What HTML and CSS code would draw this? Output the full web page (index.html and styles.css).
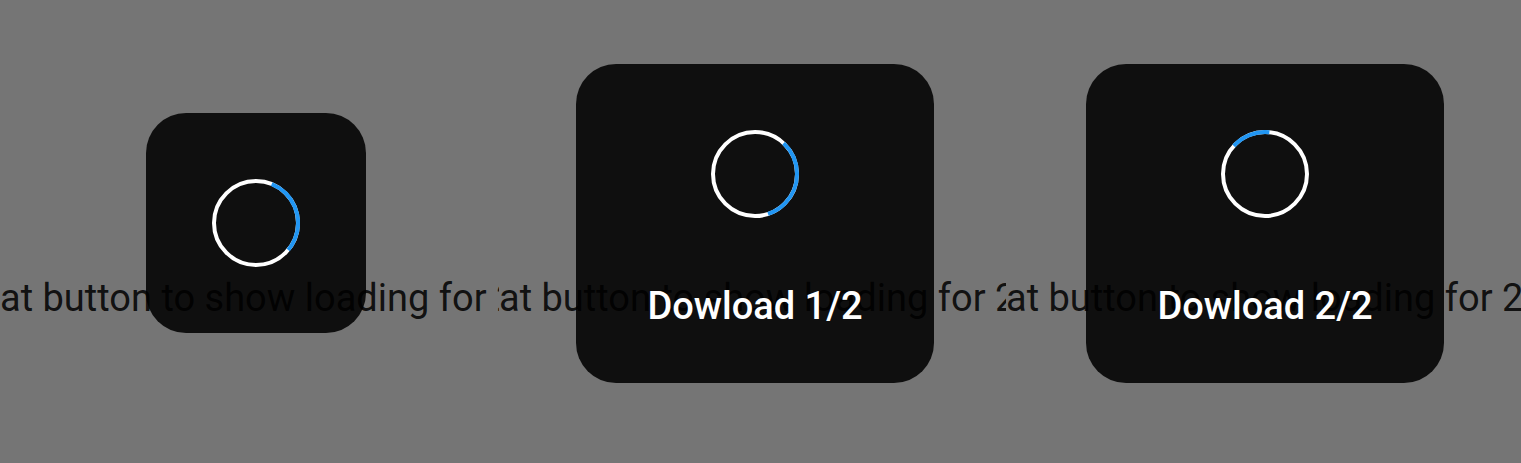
FILE: index.html
```html
<!DOCTYPE html>
<html>
<head>
<meta charset="utf-8">
<link rel="stylesheet" href="styles.css">
</head>
<body>
<main class="row">
  <section class="col col-1">
    <p class="hint">at button to show loading for 2 seconds</p>
    <div class="box box-small">
      <svg class="spinner" width="88" height="88" viewBox="0 0 88 88">
        <circle cx="44" cy="44" r="42" fill="none" stroke="#fff" stroke-width="4"/>
        <circle cx="44" cy="44" r="42" fill="none" stroke="#2196f3" stroke-width="4" pathLength="360" stroke-dasharray="108 252" transform="rotate(-68 44 44)"/>
      </svg>
    </div>
  </section>
  <section class="col col-2">
    <p class="hint">at button to show loading for 2 seconds</p>
    <div class="box box-large">
      <svg class="spinner" width="88" height="88" viewBox="0 0 88 88">
        <circle cx="44" cy="44" r="42" fill="none" stroke="#fff" stroke-width="4"/>
        <circle cx="44" cy="44" r="42" fill="none" stroke="#2196f3" stroke-width="4" pathLength="360" stroke-dasharray="119 241" transform="rotate(-47 44 44)"/>
      </svg>
      <span class="label">Dowload 1/2</span>
    </div>
  </section>
  <section class="col col-3">
    <p class="hint">at button to show loading for 2 seconds</p>
    <div class="box box-large">
      <svg class="spinner" width="88" height="88" viewBox="0 0 88 88">
        <circle cx="44" cy="44" r="42" fill="none" stroke="#fff" stroke-width="4"/>
        <circle cx="44" cy="44" r="42" fill="none" stroke="#2196f3" stroke-width="4" pathLength="360" stroke-dasharray="54 306" transform="rotate(-138 44 44)"/>
      </svg>
      <span class="label">Dowload 2/2</span>
    </div>
  </section>
</main>
</body>
</html>
```

FILE: styles.css
```css
* { box-sizing: border-box; }
html, body {
  margin: 0;
  padding: 0;
  width: 1521px;
  height: 463px;
  overflow: hidden;
  background: #757575;
  font-family: Roboto, "Liberation Sans", sans-serif;
}
.row {
  display: grid;
  grid-template-columns: 499px 507px 1fr;
  height: 463px;
}
.col {
  position: relative;
  overflow: hidden;
  display: flex;
  align-items: center;
  padding-bottom: 17px;
}
.col-1 { padding-left: 146px; }
.col-2 { padding-left: 77px; }
.col-3 { padding-left: 80px; }
.box {
  position: relative;
  background: rgba(0, 0, 0, 0.87);
  border-radius: 40px;
  display: flex;
  flex-direction: column;
  align-items: center;
}
.box-small {
  width: 220px;
  height: 220px;
  justify-content: center;
}
.box-large {
  width: 358px;
  height: 319px;
  padding-top: 66px;
}
.spinner { display: block; }
.label {
  margin-top: 68px;
  color: #fff;
  font-size: 38px;
  font-weight: 500;
  line-height: 40px;
}
.hint {
  position: absolute;
  left: 0;
  top: 278px;
  margin: 0;
  white-space: nowrap;
  font-size: 38px;
  line-height: 40px;
  color: rgba(0, 0, 0, 0.87);
}
```
